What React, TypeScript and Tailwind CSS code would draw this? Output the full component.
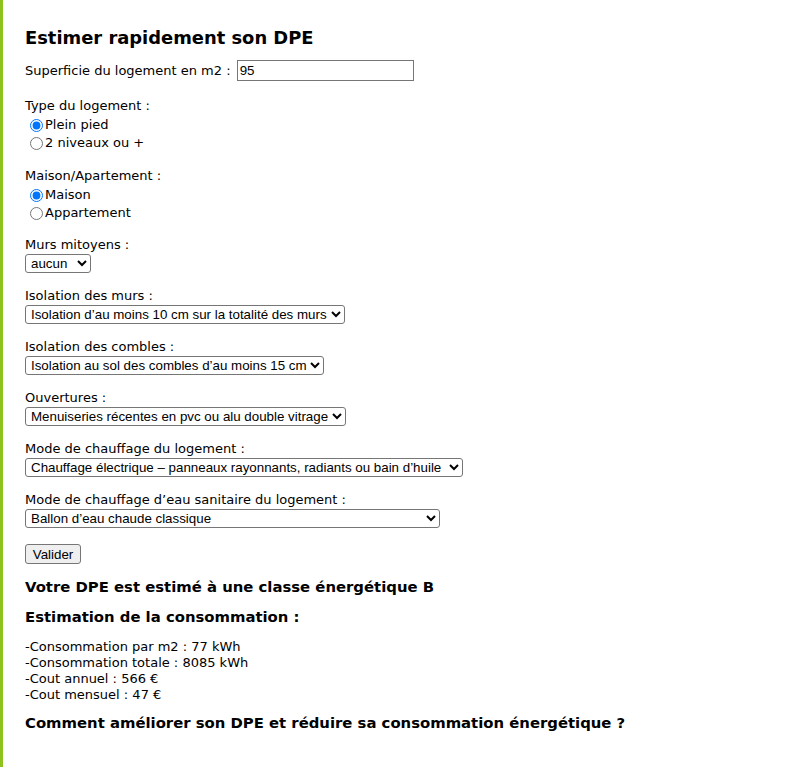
import { useState } from 'react';

const verdana = { fontFamily: '"DejaVu Sans", Verdana, sans-serif' };
const arial = { fontFamily: '"Liberation Sans", Arial, sans-serif' };

interface SelectGroupProps {
  label: string;
  options: string[];
  width: string;
}

const SelectGroup = ({ label, options, width }: SelectGroupProps) => {
  const [value, setValue] = useState(options[0]);
  return (
    <div className="mt-[15px]">
      <div className="leading-[16px]">{label}</div>
      <select
        value={value}
        onChange={(e) => setValue(e.target.value)}
        className={`block mt-[1px] h-[19px] border border-[#767676] rounded-[3px] bg-white text-[13.33px] text-black pl-[1px] ${width}`}
        style={arial}
      >
        {options.map((o) => (
          <option key={o}>{o}</option>
        ))}
      </select>
    </div>
  );
};

interface RadioProps {
  name: string;
  label: string;
  checked: boolean;
  onChange: () => void;
}

const Radio = ({ name, label, checked, onChange }: RadioProps) => (
  <label className="flex items-center h-[18px]">
    <input
      type="radio"
      name={name}
      checked={checked}
      onChange={onChange}
      className="ml-[5px] mr-[2px] w-[13px] h-[13px]"
    />
    {label}
  </label>
);

const App = () => {
  const [surface, setSurface] = useState('95');
  const [type, setType] = useState('plein');
  const [maison, setMaison] = useState('maison');

  return (
    <div
      className="min-h-screen bg-white border-l-[3px] border-[#8dc21f] pl-[22px] pt-[27px] text-[13px] text-black"
      style={verdana}
    >
      <h2 className="text-[17.9px] font-bold leading-[22px]">Estimer rapidement son DPE</h2>

      <div className="mt-[11px] flex items-center h-[21px]">
        <span>Superficie du logement en m2 :&nbsp;</span>
        <input
          type="text"
          value={surface}
          onChange={(e) => setSurface(e.target.value)}
          className="ml-[2px] w-[177px] h-[21px] border border-[#767676] px-[2px] text-[13.33px] bg-white"
          style={arial}
        />
      </div>

      <div className="mt-[17px]">
        <div className="leading-[16px]">Type du logement :</div>
        <div className="mt-[2px]">
          <Radio name="type" label="Plein pied" checked={type === 'plein'} onChange={() => setType('plein')} />
          <Radio name="type" label="2 niveaux ou +" checked={type === '2niv'} onChange={() => setType('2niv')} />
        </div>
      </div>

      <div className="mt-[16px]">
        <div className="leading-[16px]">Maison/Apartement :</div>
        <div className="mt-[2px]">
          <Radio name="maison" label="Maison" checked={maison === 'maison'} onChange={() => setMaison('maison')} />
          <Radio name="maison" label="Appartement" checked={maison === 'appart'} onChange={() => setMaison('appart')} />
        </div>
      </div>

      <div className="mt-[1px]" />
      <SelectGroup label="Murs mitoyens :" width="w-[66px]" options={['aucun', '1 mur', '2 murs']} />
      <SelectGroup
        label="Isolation des murs :"
        width="w-[320px]"
        options={['Isolation d’au moins 10 cm sur la totalité des murs', 'Aucune isolation']}
      />
      <SelectGroup
        label="Isolation des combles :"
        width="w-[299px]"
        options={['Isolation au sol des combles d’au moins 15 cm', 'Aucune isolation']}
      />
      <SelectGroup
        label="Ouvertures :"
        width="w-[321px]"
        options={['Menuiseries récentes en pvc ou alu double vitrage', 'Simple vitrage']}
      />
      <SelectGroup
        label="Mode de chauffage du logement :"
        width="w-[438px]"
        options={['Chauffage électrique – panneaux rayonnants, radiants ou bain d’huile', 'Pompe à chaleur']}
      />
      <SelectGroup
        label="Mode de chauffage d’eau sanitaire du logement :"
        width="w-[415px]"
        options={['Ballon d’eau chaude classique', 'Ballon thermodynamique', 'Chauffe-eau solaire']}
      />

      <button
        className="block mt-[16px] h-[20px] w-[56px] bg-[#efefef] border border-[#767676] rounded-[3px] text-[13.33px]"
        style={arial}
      >
        Valider
      </button>

      <h3 className="mt-[14px] text-[14.85px] font-bold leading-[18px]">
        Votre DPE est estimé à une classe énergétique B
      </h3>

      <h3 className="mt-[12px] text-[14.85px] font-bold leading-[18px]">Estimation de la consommation :</h3>
      <div className="mt-[13px] leading-[16px]">
        <div>-Consommation par m2 : 77 kWh</div>
        <div>-Consommation totale : 8085 kWh</div>
        <div>-Cout annuel : 566 €</div>
        <div>-Cout mensuel : 47 €</div>
      </div>
      <h3 className="mt-[11px] text-[14.85px] font-bold leading-[18px]">
        Comment améliorer son DPE et réduire sa consommation énergétique ?
      </h3>
    </div>
  );
};

export default App;
